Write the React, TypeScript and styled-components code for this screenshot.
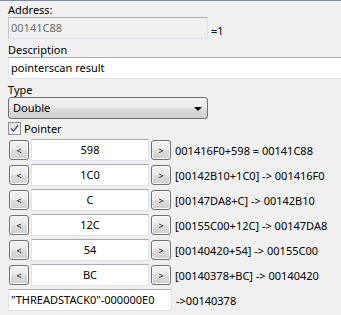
import React from "react";
import styled, { createGlobalStyle } from "styled-components";

const Global = createGlobalStyle`
  html, body {
    margin: 0;
    padding: 0;
    background: #f0f0f0;
    overflow: hidden;
  }
  body {
    font-family: "Noto Sans", "Open Sans", sans-serif;
    font-size: 11px;
    color: #000;
  }
`;

const Panel = styled.div`
  width: 341px;
  height: 315px;
  box-sizing: border-box;
  border-top: 1px solid #7c8ba3;
  padding: 1px 0 0 8px;
  display: flex;
  flex-direction: column;
  overflow: hidden;
`;

const Label = styled.div`
  height: 15px;
  line-height: 15px;
  white-space: nowrap;
`;

const FieldRow = styled.div`
  display: flex;
  align-items: flex-end;
  gap: 2px;
`;

const Edit = styled.div<{ $w: number; $disabled?: boolean; $align?: string }>`
  box-sizing: border-box;
  width: ${(p) => p.$w}px;
  height: 22px;
  flex: none;
  background: ${(p) => (p.$disabled ? "#f0f0f0" : "#ffffff")};
  color: ${(p) => (p.$disabled ? "#6d6d6d" : "#000")};
  border: 1px solid #e2e3ea;
  border-top-color: #abadb3;
  border-left-color: ${(p) => (p.$disabled ? "#c9cbd0" : "#e2e3ea")};
  padding: 0 2px;
  line-height: 20px;
  text-align: ${(p) => p.$align || "left"};
  white-space: nowrap;
  overflow: hidden;
`;

const Suffix = styled.span`
  line-height: 15px;
  margin-bottom: 1px;
  margin-left: 1px;
`;

const Gap = styled.div<{ $h: number }>`
  height: ${(p) => p.$h}px;
  flex: none;
`;

const Combo = styled.div`
  box-sizing: border-box;
  width: 200px;
  height: 22px;
  border: 1px solid #707070;
  border-radius: 3px;
  background: linear-gradient(#f2f2f2 0%, #ebebeb 50%, #dddddd 51%, #cfcfcf 100%);
  display: flex;
  align-items: center;
  justify-content: space-between;
  padding: 0 5px 0 4px;
  line-height: 20px;
`;

const Arrow = styled.span`
  width: 0;
  height: 0;
  border-left: 4px solid transparent;
  border-right: 4px solid transparent;
  border-top: 4px solid #000;
  margin-top: 1px;
`;

const CheckRow = styled.label`
  display: flex;
  align-items: center;
  gap: 3px;
  height: 15px;
  margin-top: 2px;
`;

const Box = styled.span`
  box-sizing: border-box;
  width: 13px;
  height: 13px;
  border: 1px solid #8e8f8f;
  background: linear-gradient(135deg, #dcdcdc, #fbfbfb);
  display: flex;
  align-items: center;
  justify-content: center;
`;

const OffsetList = styled.div`
  display: flex;
  flex-direction: column;
  gap: 3px;
  margin-top: 3px;
`;

const OffsetRow = styled.div`
  display: flex;
  align-items: center;
  gap: 2px;
  height: 22px;
`;

const Btn = styled.div`
  box-sizing: border-box;
  width: 20px;
  height: 20px;
  flex: none;
  border: 1px solid #707070;
  border-radius: 3px;
  background: linear-gradient(#f2f2f2 0%, #ebebeb 50%, #dddddd 51%, #cfcfcf 100%);
  box-shadow: inset 0 0 0 1px #fcfcfc;
  display: flex;
  align-items: center;
  justify-content: center;
  font-size: 9px;
  line-height: 1;
`;

const FirstBtn = styled(Btn)`
  margin-left: 1px;
`;

const Info = styled.span`
  margin-left: 2px;
  white-space: nowrap;
`;

const rows = [
  ["598", "001416F0+598 = 00141C88"],
  ["1C0", "[00142B10+1C0] -> 001416F0"],
  ["C", "[00147DA8+C] -> 00142B10"],
  ["12C", "[00155C00+12C] -> 00147DA8"],
  ["54", "[00140420+54] -> 00155C00"],
  ["BC", "[00140378+BC] -> 00140420"],
];

export default function App() {
  return (
    <>
      <Global />
      <Panel>
        <Label>Address:</Label>
        <FieldRow>
          <Edit $w={200} $disabled>
            00141C88
          </Edit>
          <Suffix>=1</Suffix>
        </FieldRow>
        <Gap $h={3} />
        <Label>Description</Label>
        <Edit $w={340}>pointerscan result</Edit>
        <Gap $h={3} />
        <Label>Type</Label>
        <Combo>
          <span>Double</span>
          <Arrow />
        </Combo>
        <CheckRow>
          <Box>
            <svg width="9" height="9" viewBox="0 0 9 9">
              <path d="M1 4.5 L3.5 7 L8 1.5" fill="none" stroke="#4a5f8c" strokeWidth="1.6" />
            </svg>
          </Box>
          <span>Pointer</span>
        </CheckRow>
        <OffsetList>
          {rows.map(([off, info]) => (
            <OffsetRow key={off + info}>
              <FirstBtn>&lt;</FirstBtn>
              <Edit $w={118} $align="center">
                {off}
              </Edit>
              <Btn>&gt;</Btn>
              <Info>{info}</Info>
            </OffsetRow>
          ))}
          <OffsetRow>
            <Edit $w={164}>"THREADSTACK0"-000000E0</Edit>
            <Info>-&gt;00140378</Info>
          </OffsetRow>
        </OffsetList>
      </Panel>
    </>
  );
}
